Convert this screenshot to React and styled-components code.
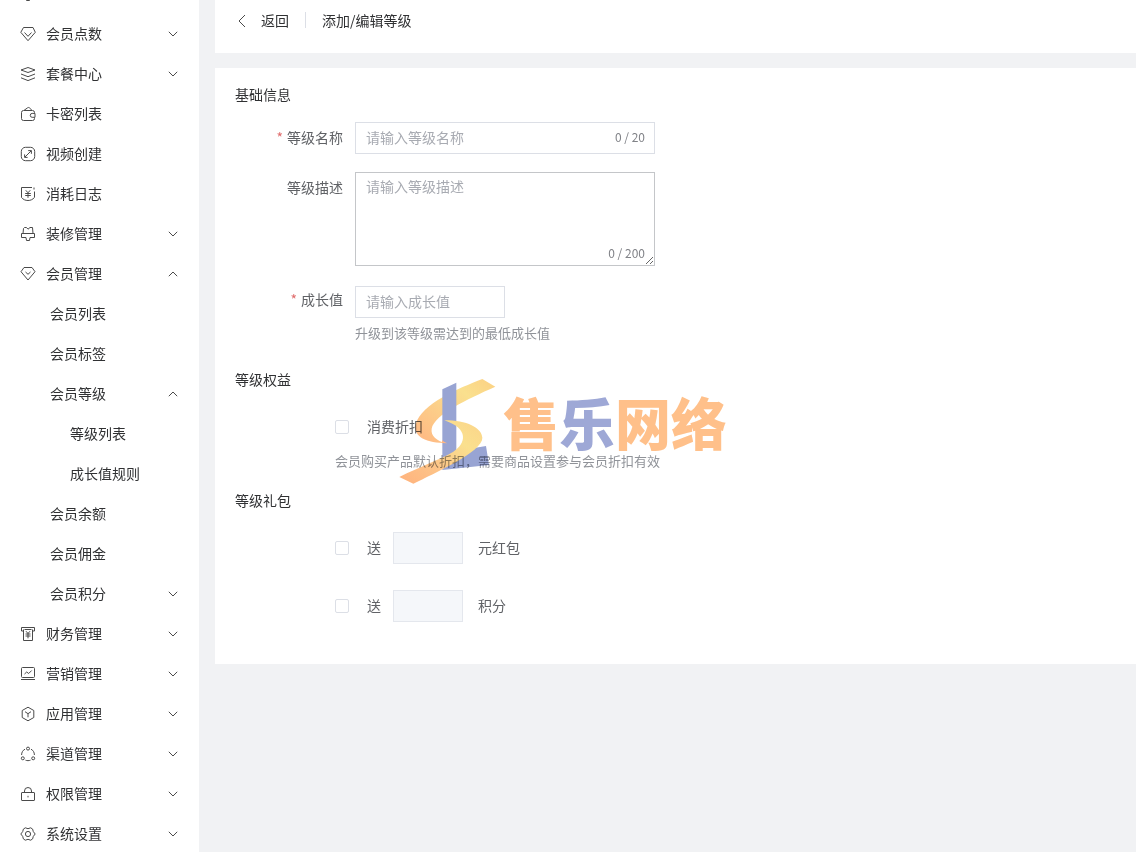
import React from "react";
import styled, { createGlobalStyle } from "styled-components";

// icons of the side menu, all on a 16px grid
const icons = {
  points: (
    <>
      <path d="M3.5 1.5h9.5l2.3 4.8L8 14.7.8 6.3z" />
      <path d="M4.5 6.5L8 10.3l3.5-3.8" />
    </>
  ),
  layers: (
    <>
      <path d="M8 1.5l7 2.5-7 2.5L1 4z" />
      <path d="M1 8l7 2.7L15 8M1 11.8l7 2.8 7-2.8" />
    </>
  ),
  wallet: (
    <>
      <path d="M14.5 7.3v-.8a2 2 0 0 0-2-2h-9a2 2 0 0 0-2 2v6a2 2 0 0 0 2 2h9a2 2 0 0 0 2-2v-1" />
      <path d="M4 4.4l3.6-2.6a1.5 1.5 0 0 1 1.8 0L12 4.4M15 7.4h-2.8a1.9 1.9 0 0 0 0 3.9H15z" />
    </>
  ),
  video: (
    <>
      <rect x="1.3" y="1.3" width="13.4" height="13.4" rx="4.2" />
      <path d="M4.8 11.2l6.4-6.4M8.2 4.6h3.2v3.2M4.6 8.4v3h3" />
    </>
  ),
  log: (
    <>
      <path d="M12 1.5H1.5v9.9c1.6 2.2 4 3.1 6.5 3.1s4.6-.9 6.5-3.1V5.5M14 1.5v2" />
      <path d="M5.8 4.3L8 6.8l2.2-2.5M5.2 7.5h5.6M5.2 9.5h5.6M8 7v4.8" />
    </>
  ),
  brush: (
    <>
      <path d="M3 7.5l.5-5 1-1h2L8 3.2l2-1.7h2.500l.5 6" />
      <path d="M3 7.5H1.5v4H6l.5 3h3l.5-3h4.500v-4H3" />
    </>
  ),
  member: (
    <>
      <path d="M4 1.5h8l3 4.2-7 8.3L1 5.7z" />
      <path d="M5.5 6L8 8.3 10.5 6" />
    </>
  ),
  finance: (
    <>
      <path d="M3.5 5h-2V1.5h13V5h-2M4.5 3.5h7M3.5 3.5v11h9v-11" />
      <path d="M6 5.2l2 2.3 2-2.3M5.5 8h5M5.5 10h5M8 7.5v4.8" />
    </>
  ),
  marketing: (
    <>
      <rect x="1.5" y="1.5" width="13" height="10" rx="1" />
      <path d="M1 13.5h14M4.5 8l2.2-2 2 1.5 3-3" />
    </>
  ),
  app: (
    <>
      <path d="M8 1.2l5.8 3.3v7L8 14.8l-5.8-3.3v-7z" />
      <path d="M5 5.7l3 2 3-2M8 7.7v3.6" />
    </>
  ),
  channel: (
    <>
      <circle cx="8" cy="2.6" r="1.5" />
      <circle cx="2.8" cy="12.3" r="1.5" />
      <circle cx="13.2" cy="12.3" r="1.5" />
      <path d="M5 3.2C2.8 4.3 1.6 6.3 1.6 9M11 3.2c2.200 1.100 3.400 3.100 3.400 5.800M5.5 14.2c1.600.6 3.400.6 5 0" />
    </>
  ),
  lock: (
    <>
      <rect x="1.5" y="6.5" width="13" height="8" rx=".5" />
      <path d="M4.5 6.5V5a3.5 3.5 0 0 1 7 0v1.5M8 9.8v1.6" />
    </>
  ),
  settings: (
    <>
      <path d="M5.3 1.8l2.7.9 2.7-.9 1.9 1.300.7 2.500L15.2 8l-1.900 2.400-.7 2.500-1.900 1.300-2.700-.9-2.700.9-1.900-1.300-.7-2.500L.8 8l1.900-2.400.7-2.500z" />
      <circle cx="8" cy="8" r="2.6" />
    </>
  ),
};

const menu = [
  { text: "会员点数", icon: "points", arrow: "down" },
  { text: "套餐中心", icon: "layers", arrow: "down" },
  { text: "卡密列表", icon: "wallet" },
  { text: "视频创建", icon: "video" },
  { text: "消耗日志", icon: "log" },
  { text: "装修管理", icon: "brush", arrow: "down" },
  {
    text: "会员管理",
    icon: "member",
    arrow: "up",
    children: [
      { text: "会员列表" },
      { text: "会员标签" },
      {
        text: "会员等级",
        arrow: "up",
        children: [{ text: "等级列表" }, { text: "成长值规则" }],
      },
      { text: "会员余额" },
      { text: "会员佣金" },
      { text: "会员积分", arrow: "down" },
    ],
  },
  { text: "财务管理", icon: "finance", arrow: "down" },
  { text: "营销管理", icon: "marketing", arrow: "down" },
  { text: "应用管理", icon: "app", arrow: "down" },
  { text: "渠道管理", icon: "channel", arrow: "down" },
  { text: "权限管理", icon: "lock", arrow: "down" },
  { text: "系统设置", icon: "settings", arrow: "down" },
];

const Arrow = ({ dir }) => (
  <Line width="10" height="6" viewBox="0 0 10 6">
    <path d={dir === "up" ? "M.8 5.2L5 1l4.2 4.2" : "M.8.8L5 5 9.2.8"} />
  </Line>
);

const MenuList = ({ items, level = 0 }) => (
  <List>
    {items.map((item) => (
      <li key={item.text}>
        <MenuLink
          as={item.arrow ? "button" : "a"}
          href={item.arrow ? undefined : "#"}
          aria-expanded={item.arrow ? item.arrow === "up" : undefined}
          $level={level}
        >
          {item.icon && (
            <Line width="16" height="16" viewBox="0 0 16 16">
              {icons[item.icon]}
            </Line>
          )}
          <span>{item.text}</span>
          {item.arrow && <Arrow dir={item.arrow} />}
        </MenuLink>
        {item.children && <MenuList items={item.children} level={level + 1} />}
      </li>
    ))}
  </List>
);

const GiftRow = ({ id, unit }) => (
  <CheckRow>
    <Checkbox id={id} />
    <label htmlFor={id}>送</label>
    <SmallInput disabled aria-label={unit} />
    <span>{unit}</span>
  </CheckRow>
);

const Watermark = () => (
  <Mark aria-hidden="true">
    <svg width="115" height="120" viewBox="0 0 345 360">
      <defs>
        <linearGradient id="upper" x1="1" y1="0" x2="0" y2="1">
          <stop offset="0" stopColor="#fcd083" />
          <stop offset=".3" stopColor="#fae08e" />
          <stop offset="1" stopColor="#ffb683" />
        </linearGradient>
        <linearGradient id="lower" x1="1" y1="0" x2="0" y2="1">
          <stop offset="0" stopColor="#fbd489" />
          <stop offset=".3" stopColor="#fae08e" />
          <stop offset=".65" stopColor="#fdc488" />
          <stop offset="1" stopColor="#ffb27d" />
        </linearGradient>
      </defs>
      <path
        d="M277 24C205 52 95 98 77 160c-8 38 32 56 95 57-34-7-50-23-47-44 8-42 105-88 191-126z"
        fill="url(#upper)"
      />
      <path d="M157 55l42-20v205l89-15 9 57-140 15z" fill="#98a4d3" />
      <path d="M156 208c6 4 10 7 17 9l-17-1z" fill="#ffb683" />
      <path
        d="M163 148c68 0 112 22 114 52 2 42-145 107-207 138l-42-20c60-31 122-52 162-76 38-24 48-69-27-94z"
        fill="url(#lower)"
      />
    </svg>
    <MarkText>
      售<MarkBlue>乐</MarkBlue>网络
    </MarkText>
  </Mark>
);

const App = () => {
  return (
    <>
      <GlobalStyle />
      <Page>
        <Sidebar aria-label="菜单">
          <Scrolled>
            <Line width="16" height="16" viewBox="0 0 16 16">
              <path d="M1.5 6.5h13v4H10l-.5 3h-3l-.5-3H1.5z" />
            </Line>
          </Scrolled>
          <MenuList items={menu} />
        </Sidebar>
        <Main>
          <Header>
            <Back type="button">
              <Line width="8" height="14" viewBox="0 0 8 14">
                <path d="M7 1L1 7l6 6" />
              </Line>
              <span>返回</span>
            </Back>
            <Title>添加/编辑等级</Title>
          </Header>
          <Card>
            <Heading>基础信息</Heading>
            <Fields>
              <Field>
                <Label htmlFor="name" $required>
                  等级名称
                </Label>
                <Control>
                  <Input id="name" placeholder="请输入等级名称" />
                  <Count>0 / 20</Count>
                </Control>
              </Field>
              <Field>
                <Label htmlFor="desc">等级描述</Label>
                <Control>
                  <TextArea id="desc" placeholder="请输入等级描述" />
                  <Count>0 / 200</Count>
                </Control>
              </Field>
              <Field>
                <Label htmlFor="growth" $required $short>
                  成长值
                </Label>
                <Control>
                  <Input id="growth" placeholder="请输入成长值" $half />
                  <Hint>升级到该等级需达到的最低成长值</Hint>
                </Control>
              </Field>
            </Fields>
            <Heading>等级权益</Heading>
            <Benefit>
              <CheckRow>
                <Checkbox id="discount" />
                <label htmlFor="discount">消费折扣</label>
              </CheckRow>
              <Hint>会员购买产品默认折扣，需要商品设置参与会员折扣有效</Hint>
              <Watermark />
            </Benefit>
            <Heading>等级礼包</Heading>
            <Gifts>
              <GiftRow id="cash" unit="元红包" />
              <GiftRow id="score" unit="积分" />
            </Gifts>
          </Card>
        </Main>
      </Page>
    </>
  );
};

const GlobalStyle = createGlobalStyle`
  *{
    box-sizing: border-box;
  }
  body{
    margin: 0;
    overflow: hidden;
    background: #f1f2f4;
    color: #303133;
    font-family: "Noto Sans CJK SC", sans-serif;
    font-size: 14px;
    line-height: 20px;
  }
  button, input, textarea{
    font: inherit;
    color: inherit;
  }
`;

const Page = styled.div`
  display: flex;
  height: 100vh;
`;

const Sidebar = styled.nav`
  flex: 0 0 199px;
  overflow: hidden;
  background: #fff;
`;

const Scrolled = styled.div`
  display: flex;
  align-items: flex-end;
  height: 14px;
  padding: 0 20px 11px;
`;

const Line = styled.svg`
  flex: none;
  fill: none;
  stroke: #4a4a4a;
  stroke-width: 1;
`;

const List = styled.ul`
  margin: 0;
  padding: 0;
  list-style: none;
`;

const MenuLink = styled.a`
  display: flex;
  align-items: center;
  gap: 10px;
  width: 100%;
  height: 40px;
  padding: 0 21px 0 ${({ $level }) => [20, 50, 70][$level]}px;
  border: 0;
  background: none;
  color: #303133;
  text-align: left;
  text-decoration: none;
  cursor: pointer;
  span{
    flex: 1;
    padding-bottom: 2px;
  }
`;

const Main = styled.main`
  flex: 1;
  display: flex;
  flex-direction: column;
  gap: 15px;
  padding-left: 16px;
`;

const Header = styled.header`
  display: flex;
  align-items: center;
  padding: 10px 23px 21px;
  background: #fff;
`;

const Back = styled.button`
  display: flex;
  align-items: center;
  gap: 15px;
  padding: 0;
  border: 0;
  background: none;
  cursor: pointer;
  span{
    padding-bottom: 2px;
  }
`;

const Title = styled.div`
  display: flex;
  align-items: center;
  margin-left: 16px;
  padding-bottom: 2px;
  &::before{
    content: "";
    width: 1px;
    height: 16px;
    margin-right: 16px;
    background: #dcdfe6;
  }
`;

const Card = styled.section`
  padding: 16px 20px 42px;
  background: #fff;
`;

const Heading = styled.h2`
  margin: 0;
  font-size: 14px;
  font-weight: 400;
  line-height: 20px;
`;

const Fields = styled.div`
  display: grid;
  gap: 18px;
  padding: 18px 0 26px;
`;

const Field = styled.div`
  display: flex;
`;

const Label = styled.label`
  flex: 0 0 120px;
  padding-right: 12px;
  color: #606266;
  line-height: ${({ $short }) => ($short ? 26 : 30)}px;
  text-align: right;
  &::before{
    content: "${({ $required }) => ($required ? "*" : "")}";
    margin-right: 4px;
    color: #e06c6c;
  }
`;

const Control = styled.div`
  position: relative;
  flex: 0 1 300px;
`;

const Input = styled.input`
  display: block;
  width: ${({ $half }) => ($half ? "50%" : "100%")};
  height: 32px;
  padding: 0 10px 2px;
  border: 1px solid #dcdfe6;
  background: #fff;
  &::placeholder{
    color: #a8abb2;
  }
`;

const TextArea = styled.textarea`
  display: block;
  width: 100%;
  height: 94px;
  margin-bottom: 2px;
  padding: 3px 10px;
  border: 1px solid #c4c6c9;
  resize: vertical;
  &::placeholder{
    color: #a8abb2;
  }
`;

const Count = styled.span`
  position: absolute;
  right: 10px;
  bottom: 7px;
  color: #808287;
  font-size: 12px;
  textarea + &{
    bottom: 5px;
  }
`;

const Hint = styled.p`
  margin: 5px 0 0;
  color: #909399;
  font-size: 13px;
  white-space: nowrap;
`;

const Benefit = styled.div`
  position: relative;
  padding: 22px 0 19px 100px;
  ${Hint}{
    margin-top: 8px;
  }
`;

const CheckRow = styled.div`
  display: flex;
  align-items: center;
  min-height: 32px;
  color: #606266;
  label, span{
    padding-bottom: 2px;
  }
  label{
    margin-left: 18px;
  }
`;

const Checkbox = styled.input.attrs({ type: "checkbox" })`
  appearance: none;
  width: 14px;
  height: 14px;
  margin: 0;
  border: 1px solid #dcdfe6;
  border-radius: 2px;
  background: #fff;
`;

const SmallInput = styled.input`
  width: 70px;
  height: 32px;
  margin: 0 15px 0 12px;
  border: 1px solid #e4e7ed;
  background: #f5f7fa;
`;

const Gifts = styled.div`
  display: grid;
  gap: 26px;
  padding: 22px 0 0 100px;
`;

const Mark = styled.div`
  position: absolute;
  top: -18px;
  left: 155px;
  display: flex;
  align-items: center;
  mix-blend-mode: multiply;
  pointer-events: none;
`;

const MarkText = styled.span`
  margin: 0 0 20px -2px;
  color: #ffc08a;
  font-size: 56px;
  font-weight: 900;
  line-height: 56px;
  white-space: nowrap;
`;

const MarkBlue = styled.span`
  color: #9ea8d6;
`;

export default App;
